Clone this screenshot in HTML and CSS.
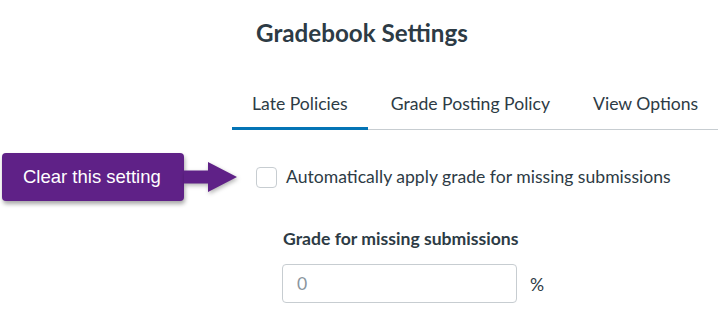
FILE: index.html
```html
<html>
    <head>
        <meta name="viewport" content="width=device-width, initial-scale=1.0">
        <link rel="stylesheet" href="styles.css">
    </head>
    <body>
        <div class="settings">
            <h1 class="title">Gradebook Settings</h1>

            <div class="tabs">
                <div class="tab active">Late Policies</div>
                <div class="tab">Grade Posting Policy</div>
                <div class="tab">View Options</div>
            </div>

            <div class="option-row">
                <div class="callout">Clear this setting</div>
                <svg class="arrow" width="56" height="34" viewBox="0 0 56 34">
                    <path d="M0 10.5 H24 V2 L53 17 L24 32 V23.5 H0 Z" fill="#5f2187"/>
                </svg>
                <label class="check">
                    <span class="box"></span>
                    <span>Automatically apply grade for missing submissions</span>
                </label>
            </div>

            <div class="field">
                <div class="field-label">Grade for missing submissions</div>
                <div class="field-row">
                    <input type="text" class="field-input" placeholder="0">
                    <span class="unit">%</span>
                </div>
            </div>
        </div>
    </body>
</html>
```

FILE: styles.css
```css
html, body {
    margin: 0;
    padding: 0;
    background: #fff;
    font-family: Lato, "Noto Sans", sans-serif;
    color: #2d3b45;
}
.settings {
    width: 720px;
    height: 336px;
    overflow: hidden;
}
.title {
    margin: 0;
    padding: 18px 0 0 256px;
    font-size: 24.2px;
    font-weight: 700;
    line-height: 30px;
}
.tabs {
    display: flex;
    gap: 3px;
    margin: 44px 2px 0 232px;
    border-bottom: 1px solid #c7cdd1;
    white-space: nowrap;
}
.tab {
    flex-shrink: 0;
    padding: 0 20px 11px 20px;
    font-size: 17.6px;
    line-height: 24px;
    border-bottom: 3px solid transparent;
    margin-bottom: -1px;
}
.tab.active {
    border-bottom-color: #0374b5;
}
.option-row {
    display: flex;
    align-items: center;
    margin-top: 23px;
}
.callout {
    margin-left: 2px;
    width: 161px;
    height: 48px;
    padding-left: 21px;
    background: #5f2187;
    color: #fff;
    font-family: "Liberation Sans", Arial, sans-serif;
    font-size: 18.5px;
    line-height: 48px;
    border-radius: 4px;
    box-shadow: 1px 3px 4px rgba(0, 0, 0, 0.35);
}
.arrow {
    display: block;
    filter: drop-shadow(1px 2px 2px rgba(0, 0, 0, 0.3));
}
.check {
    display: flex;
    align-items: center;
    margin-left: 16px;
    font-size: 17.6px;
    line-height: 24px;
}
.box {
    width: 19px;
    height: 19px;
    border: 1px solid #c7cdd1;
    border-radius: 4px;
    margin-right: 9px;
}
.field {
    margin: 27px 0 0 283px;
}
.field-label {
    font-size: 17.6px;
    font-weight: 700;
    line-height: 22px;
}
.field-row {
    display: flex;
    align-items: center;
    margin-top: 14px;
    margin-left: -1px;
}
.field-input {
    width: 235px;
    height: 39px;
    box-sizing: border-box;
    border: 1px solid #c7cdd1;
    border-radius: 4px;
    padding: 0 14px;
    font-family: Lato, sans-serif;
    font-size: 17.6px;
    color: #2d3b45;
}
.field-input::placeholder {
    color: #8b969e;
}
.unit {
    margin-left: 13px;
    margin-top: 2px;
    font-size: 17.6px;
}
```
